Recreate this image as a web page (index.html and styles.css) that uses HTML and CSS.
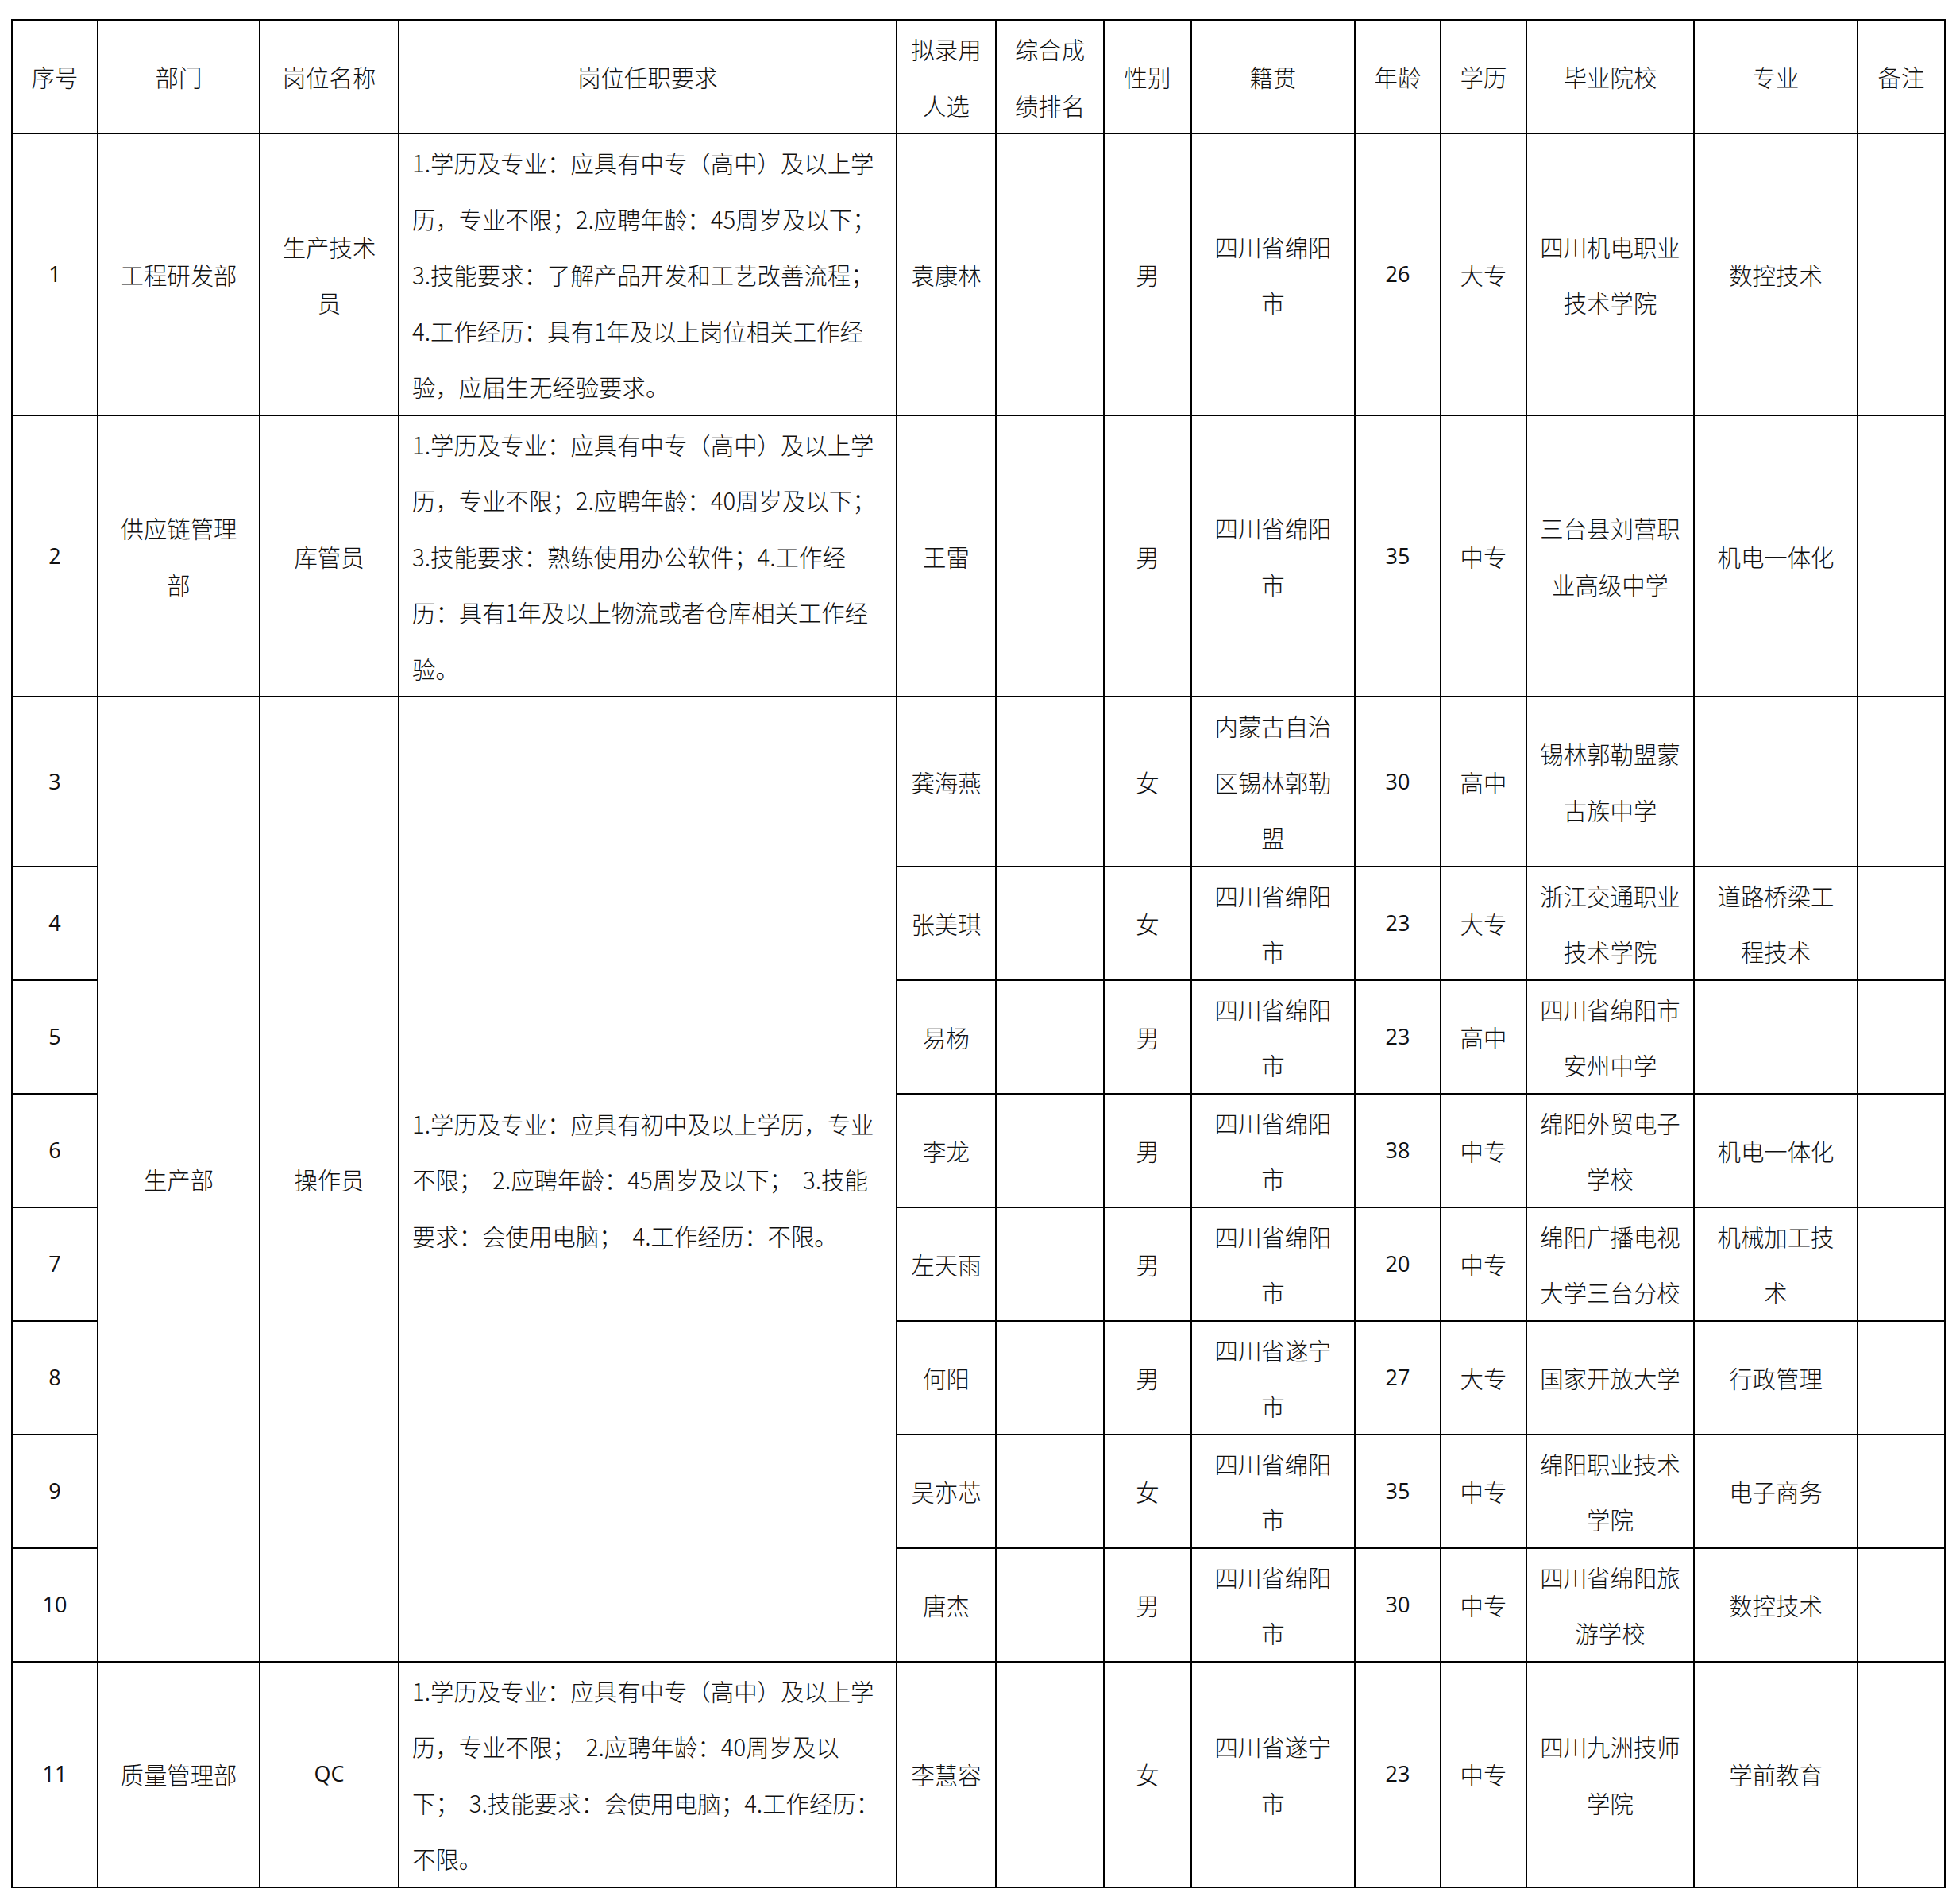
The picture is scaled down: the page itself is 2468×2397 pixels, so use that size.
FILE: index.html
```html
<!DOCTYPE html>
<html lang="zh-CN">
<head>
<meta charset="utf-8">
<title>拟录用人员名单</title>
<link rel="stylesheet" href="styles.css">
</head>
<body>
<div class="page">
<table class="roster">
  <colgroup>
    <col class="c-no"><col class="c-dept"><col class="c-post"><col class="c-req">
    <col class="c-name"><col class="c-rank"><col class="c-sex"><col class="c-origin">
    <col class="c-age"><col class="c-edu"><col class="c-school"><col class="c-major"><col class="c-note">
  </colgroup>
  <thead>
    <tr>
      <th>序号</th><th>部门</th><th>岗位名称</th><th>岗位任职要求</th>
      <th>拟录用<br>人选</th><th>综合成<br>绩排名</th><th>性别</th><th>籍贯</th>
      <th>年龄</th><th>学历</th><th>毕业院校</th><th>专业</th><th>备注</th>
    </tr>
  </thead>
  <tbody>
    <tr>
      <td class="num">1</td><td>工程研发部</td><td>生产技术<br>员</td>
      <td class="req">1.学历及专业：应具有中专（高中）及以上学<br>历，专业不限；2.应聘年龄：45周岁及以下；<br>3.技能要求：了解产品开发和工艺改善流程；<br>4.工作经历：具有1年及以上岗位相关工作经<br>验，应届生无经验要求。</td>
      <td>袁康林</td><td></td><td>男</td><td>四川省绵阳<br>市</td><td class="num">26</td><td>大专</td><td>四川机电职业<br>技术学院</td><td>数控技术</td><td></td>
    </tr>
    <tr>
      <td class="num">2</td><td>供应链管理<br>部</td><td>库管员</td>
      <td class="req">1.学历及专业：应具有中专（高中）及以上学<br>历，专业不限；2.应聘年龄：40周岁及以下；<br>3.技能要求：熟练使用办公软件；4.工作经<br>历：具有1年及以上物流或者仓库相关工作经<br>验。</td>
      <td>王雷</td><td></td><td>男</td><td>四川省绵阳<br>市</td><td class="num">35</td><td>中专</td><td>三台县刘营职<br>业高级中学</td><td>机电一体化</td><td></td>
    </tr>
    <tr>
      <td class="num">3</td><td rowspan="8">生产部</td><td rowspan="8">操作员</td>
      <td class="req" rowspan="8">1.学历及专业：应具有初中及以上学历，专业<br>不限；&nbsp;&nbsp;2.应聘年龄：45周岁及以下；&nbsp;&nbsp;3.技能<br>要求：会使用电脑；&nbsp;&nbsp;4.工作经历：不限。</td>
      <td>龚海燕</td><td></td><td>女</td><td>内蒙古自治<br>区锡林郭勒<br>盟</td><td class="num">30</td><td>高中</td><td>锡林郭勒盟蒙<br>古族中学</td><td></td><td></td>
    </tr>
    <tr>
      <td class="num">4</td>
      <td>张美琪</td><td></td><td>女</td><td>四川省绵阳<br>市</td><td class="num">23</td><td>大专</td><td>浙江交通职业<br>技术学院</td><td>道路桥梁工<br>程技术</td><td></td>
    </tr>
    <tr>
      <td class="num">5</td>
      <td>易杨</td><td></td><td>男</td><td>四川省绵阳<br>市</td><td class="num">23</td><td>高中</td><td>四川省绵阳市<br>安州中学</td><td></td><td></td>
    </tr>
    <tr>
      <td class="num">6</td>
      <td>李龙</td><td></td><td>男</td><td>四川省绵阳<br>市</td><td class="num">38</td><td>中专</td><td>绵阳外贸电子<br>学校</td><td>机电一体化</td><td></td>
    </tr>
    <tr>
      <td class="num">7</td>
      <td>左天雨</td><td></td><td>男</td><td>四川省绵阳<br>市</td><td class="num">20</td><td>中专</td><td>绵阳广播电视<br>大学三台分校</td><td>机械加工技<br>术</td><td></td>
    </tr>
    <tr>
      <td class="num">8</td>
      <td>何阳</td><td></td><td>男</td><td>四川省遂宁<br>市</td><td class="num">27</td><td>大专</td><td>国家开放大学</td><td>行政管理</td><td></td>
    </tr>
    <tr>
      <td class="num">9</td>
      <td>吴亦芯</td><td></td><td>女</td><td>四川省绵阳<br>市</td><td class="num">35</td><td>中专</td><td>绵阳职业技术<br>学院</td><td>电子商务</td><td></td>
    </tr>
    <tr>
      <td class="num">10</td>
      <td>唐杰</td><td></td><td>男</td><td>四川省绵阳<br>市</td><td class="num">30</td><td>中专</td><td>四川省绵阳旅<br>游学校</td><td>数控技术</td><td></td>
    </tr>
    <tr>
      <td class="num">11</td><td>质量管理部</td><td class="num">QC</td>
      <td class="req">1.学历及专业：应具有中专（高中）及以上学<br>历，专业不限；&nbsp;&nbsp;2.应聘年龄：40周岁及以<br>下；&nbsp;&nbsp;3.技能要求：会使用电脑；4.工作经历：<br>不限。</td>
      <td>李慧容</td><td></td><td>女</td><td>四川省遂宁<br>市</td><td class="num">23</td><td>中专</td><td>四川九洲技师<br>学院</td><td>学前教育</td><td></td>
    </tr>
  </tbody>
</table>
</div>
</body>
</html>
```

FILE: styles.css
```css
html, body {
  margin: 0;
  padding: 0;
  background: #ffffff;
}

.page {
  padding: 24px 0 0 14px;
}

.roster {
  border-collapse: collapse;
  table-layout: fixed;
  width: 2436px;
  border: 2px solid #000;
  font-family: "Noto Sans CJK SC", "Noto Sans", sans-serif;
  font-size: 29.4px;
  font-weight: 300;
  color: #111;
}

.c-no { width: 108px; }
.c-dept { width: 204px; }
.c-post { width: 175px; }
.c-req { width: 627px; }
.c-name { width: 125px; }
.c-rank { width: 136px; }
.c-sex { width: 110px; }
.c-origin { width: 206px; }
.c-age { width: 108px; }
.c-edu { width: 108px; }
.c-school { width: 211px; }
.c-major { width: 206px; }
.c-note { width: 110px; }

.roster th,
.roster td {
  border: 2px solid #000;
  padding: 0 8px;
  line-height: 70.5px;
  text-align: center;
  vertical-align: middle;
  font-weight: 300;
  white-space: nowrap;
  overflow: hidden;
}

.roster thead th {
  height: 141px;
}

.roster td.req {
  text-align: left;
  padding: 0 8px 0 16px;
}

.roster td.num {
  font-family: "Open Sans", "Noto Sans CJK SC", sans-serif;
  font-weight: 400;
  font-size: 27px;
}
```
